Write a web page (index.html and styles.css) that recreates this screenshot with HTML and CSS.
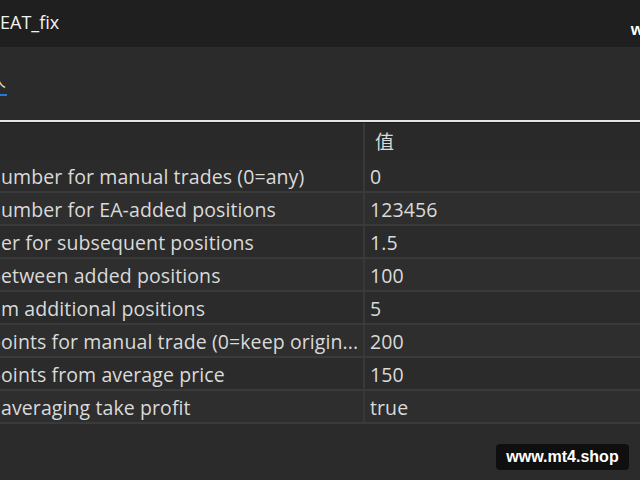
FILE: index.html
```html
<!DOCTYPE html>
<html lang="zh">
<head>
    <meta charset="UTF-8">
    <title>EAT_fix</title>
    <link rel="stylesheet" href="styles.css">
</head>
<body>
    <div class="titlebar">
        <span class="title">EAT_fix</span>
        <span class="corner">w</span>
    </div>
    <div class="tabs">
        <div class="tab">
            <span class="tab-label">人</span>
        </div>
    </div>
    <div class="rule"></div>
    <div class="params">
        <div class="row header">
            <div class="cell name"></div>
            <div class="cell value">值</div>
        </div>
        <div class="row">
            <div class="cell name">umber for manual trades (0=any)</div>
            <div class="cell value">0</div>
        </div>
        <div class="row alt">
            <div class="cell name">umber for EA-added positions</div>
            <div class="cell value">123456</div>
        </div>
        <div class="row">
            <div class="cell name">er for subsequent positions</div>
            <div class="cell value">1.5</div>
        </div>
        <div class="row alt">
            <div class="cell name"><span class="cut">between added positions</span></div>
            <div class="cell value">100</div>
        </div>
        <div class="row">
            <div class="cell name">m additional positions</div>
            <div class="cell value">5</div>
        </div>
        <div class="row alt">
            <div class="cell name"><span class="cut">points for manual trade (0=keep origin...</span></div>
            <div class="cell value">200</div>
        </div>
        <div class="row">
            <div class="cell name"><span class="cut">points from average price</span></div>
            <div class="cell value">150</div>
        </div>
        <div class="row alt">
            <div class="cell name">averaging take profit</div>
            <div class="cell value">true</div>
        </div>
    </div>
    <div class="watermark">www.mt4.shop</div>
</body>
</html>
```

FILE: styles.css
```css
body {
    margin: 0;
    width: 640px;
    height: 480px;
    overflow: hidden;
    background-color: #2b2b2b;
    color: #dadada;
    font-family: "Open Sans", "Noto Sans CJK SC", sans-serif;
    position: relative;
}

.titlebar {
    height: 47px;
    background-color: #1f1f1f;
    display: flex;
    align-items: center;
    justify-content: space-between;
}

.title {
    font-size: 18px;
    color: #f2f2f2;
    margin-top: -3px;
}

.corner {
    font-family: "Liberation Sans", sans-serif;
    font-weight: bold;
    font-size: 17px;
    color: #fff;
    margin-top: 12px;
    margin-right: -4px;
}

.tabs {
    height: 73px;
    display: flex;
}

.tab {
    width: 7px;
    overflow: hidden;
    position: relative;
    margin-top: 22px;
    height: 30px;
}

.tab-label {
    display: block;
    font-family: "Noto Sans CJK SC", sans-serif;
    font-size: 17px;
    color: #e6dcc8;
    margin-left: -11px;
    line-height: 22px;
}

.tab::after {
    content: '';
    position: absolute;
    left: 0;
    bottom: 3px;
    width: 7px;
    height: 2px;
    background-color: #1f7ad8; /* active tab marker */
}

.rule {
    height: 2px;
    background-color: #e4e4e4;
    border-bottom: 1px solid #1a1a1a;
}

.params {
    display: flex;
    flex-direction: column;
}

.row {
    display: flex;
    height: 31px;
    border-bottom: 2px solid #3a3a3a;
    font-size: 19.5px;
    letter-spacing: 0.1px;
}

.row.alt {
    background-color: #2e2e2e;
}

.row.header {
    height: 37px;
    border-bottom: none;
    background-color: #292929;
}

.cell {
    display: flex;
    align-items: center;
    white-space: nowrap;
    overflow: hidden;
    padding-top: 1px;
}

.name {
    width: 362px;
    border-right: 2px solid #383838;
    padding-left: 1px;
}

.cut {
    margin-left: -12px;
}

.value {
    padding-left: 5px;
    flex: 1;
}

.header .value {
    font-family: "Noto Sans CJK SC", sans-serif;
    font-size: 19px;
    padding-left: 10px;
    padding-top: 0;
    margin-top: -2px;
}

.watermark {
    position: absolute;
    left: 496px;
    top: 444px;
    width: 133px;
    height: 26px;
    background-color: #0f0f0f;
    border-radius: 4px;
    color: #fff;
    font-family: "Liberation Sans", sans-serif;
    font-weight: bold;
    font-size: 16px;
    display: flex;
    align-items: center;
    justify-content: center;
}
```
